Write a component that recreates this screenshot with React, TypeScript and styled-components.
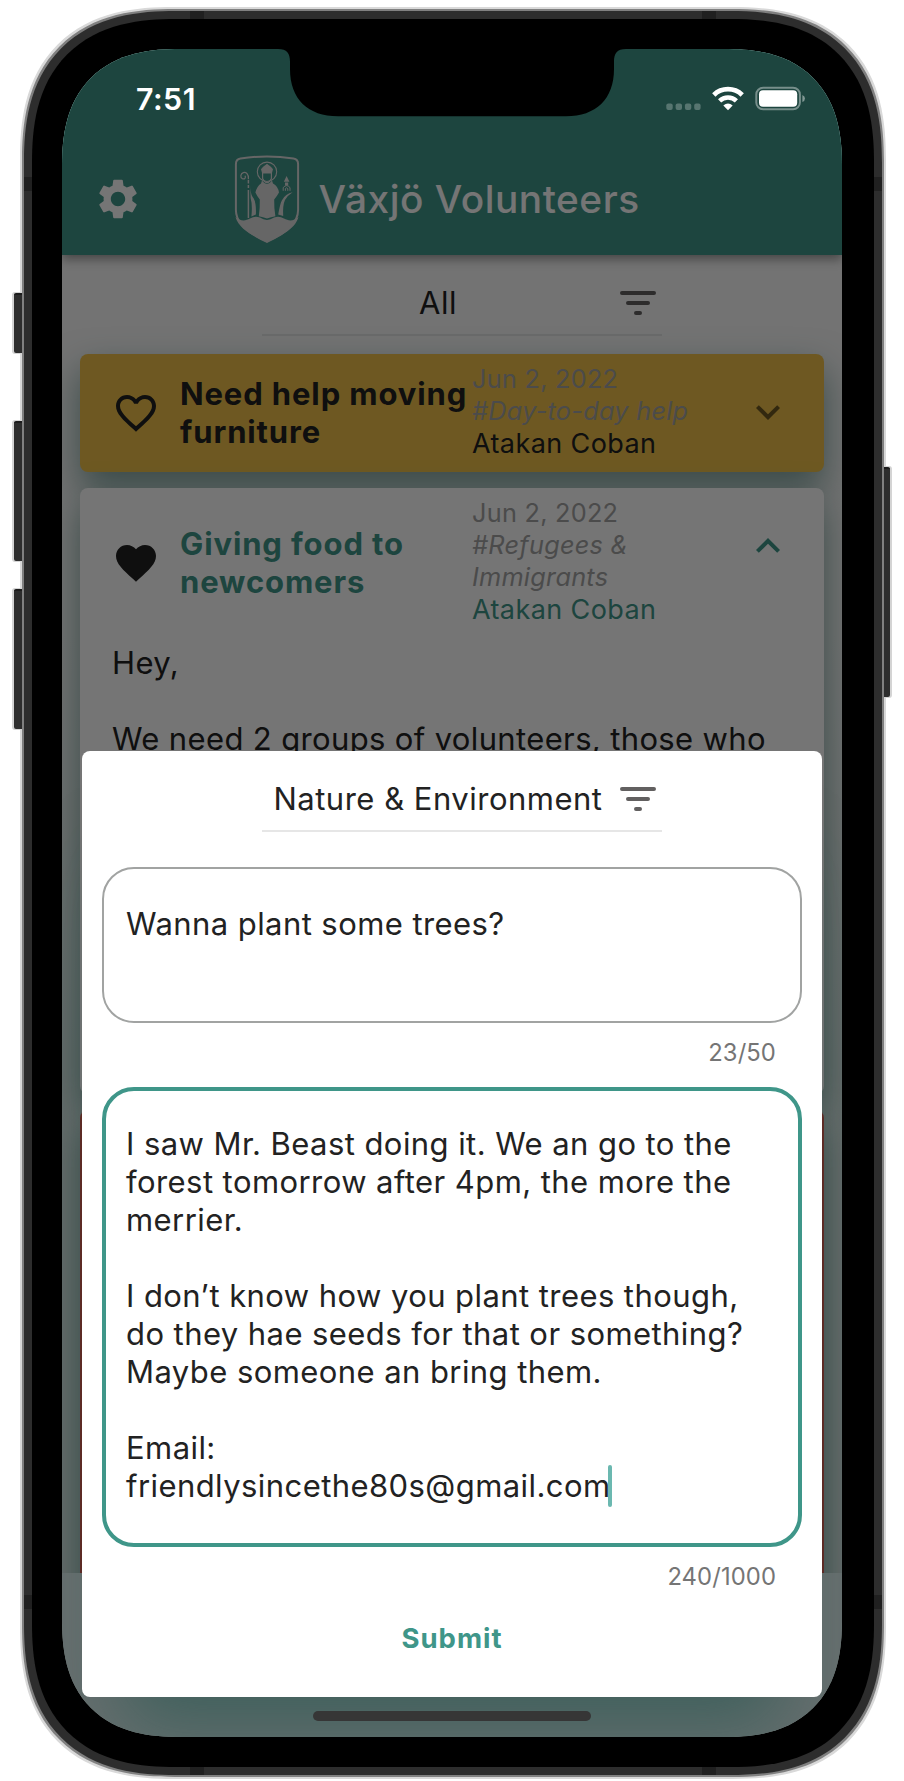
import React from "react";
import styled, { createGlobalStyle } from "styled-components";
import { MdExpandLess, MdExpandMore, MdFavorite, MdFavoriteBorder, MdSettings } from "react-icons/md";

const TEAL = "#3f9689";

const GlobalStyle = createGlobalStyle`
  * { box-sizing: border-box; }
  body {
    margin: 0;
    background: #fff;
    font-family: Inter, Roboto, "Liberation Sans", sans-serif;
    color: #222;
  }
`;

const Page = styled.main`
  display: flex;
  width: 904px;
  height: 1781px;
  padding: 11px 0 0 24px;
  overflow: hidden;
`;

/* ---------- device ---------- */

const Frame = styled.div`
  position: relative;
  width: 858px;
  height: 1764px;
  padding: 8px;
  border-radius: 126px;
  background: #2d2d2d;
  box-shadow: 0 0 0 2px #808080, 0 0 0 4px #d9d9d9;

  @supports (corner-shape: superellipse(1.3)) {
    border-radius: 152px;
    corner-shape: superellipse(1.3);
  }
`;

const Bezel = styled.div`
  height: 100%;
  padding: 30px 32px 30px 30px;
  border-radius: 118px;
  background: #000;

  @supports (corner-shape: superellipse(1.3)) {
    border-radius: 144px;
    corner-shape: superellipse(1.3);
  }
`;

const Screen = styled.div`
  position: relative;
  display: flex;
  flex-direction: column;
  height: 1688px;
  border-radius: 98px;
  overflow: hidden;
  background: #e0f2f1;

  @supports (corner-shape: superellipse(1.3)) {
    border-radius: 118px;
    corner-shape: superellipse(1.3);
  }
`;

const SideButton = styled.span<{ $side: "left" | "right"; $top: number; $height: number }>`
  position: absolute;
  ${(p) => p.$side}: ${(p) => (p.$side === "left" ? -10 : -8)}px;
  top: ${(p) => p.$top}px;
  width: ${(p) => (p.$side === "left" ? 8 : 6)}px;
  height: ${(p) => p.$height}px;
  background: #2d2d2d;
  border-top: 2px solid #1c1c1c;
  border-radius: ${(p) => (p.$side === "left" ? "2px 0 0 2px" : "0 2px 2px 0")};
  box-shadow: ${(p) => (p.$side === "left" ? "-1px" : "1px")} 0 0 1px #d4d4d4;
`;

const Antenna = styled.span<{ $x: "left" | "right"; $y: "top" | "bottom"; $vertical?: boolean }>`
  position: absolute;
  background: #202020;
  ${(p) => p.$x}: ${(p) => (p.$vertical ? 0 : 166)}px;
  ${(p) => p.$y}: ${(p) => (p.$vertical ? 166 : 0)}px;
  width: ${(p) => (p.$vertical ? 8 : 14)}px;
  height: ${(p) => (p.$vertical ? 14 : 8)}px;
`;

const Notch = styled.svg`
  position: absolute;
  top: 0;
  left: 216px;
  width: 348px;
  height: 68px;
  z-index: 4;
`;

/* ---------- app bar ---------- */

const Header = styled.header`
  position: relative;
  z-index: 1;
  flex: none;
  height: 206px;
  padding-top: 94px;
  background: ${TEAL};
  box-shadow: 0 4px 10px rgba(0, 0, 0, 0.4);
`;

const Toolbar = styled.div`
  display: flex;
  align-items: center;
  height: 112px;
  padding-left: 32px;
  color: #fff;
`;

const Crest = styled.svg`
  width: 66px;
  height: 90px;
  margin-left: 92px;
`;

const AppTitle = styled.h1`
  margin: 0 0 0 18.5px;
  font-size: 38.8px;
  font-weight: 500;
  line-height: 48px;
  letter-spacing: 0.52px;
  white-space: nowrap;
`;

const StatusBar = styled.div`
  position: absolute;
  z-index: 4;
  top: 0;
  left: 0;
  right: 0;
  display: flex;
  justify-content: space-between;
  align-items: center;
  height: 100px;
  padding: 0 37px 0 74px;
  color: #fff;
`;

const Clock = styled.time`
  font-size: 30.3px;
  font-weight: 600;
  letter-spacing: 0.5px;
`;

/* ---------- feed ---------- */

const Feed = styled.section`
  flex: none;
  height: 1318px;
  padding: 17px 18px 0;
  overflow: hidden;
  background: linear-gradient(#fafafa 380px, #e4f0ee 800px);
`;

const Select = styled.div`
  display: flex;
  align-items: center;
  width: 400px;
  height: 64px;
  border-bottom: 2px solid #e6e6e6;
`;

const FeedSelect = styled(Select)`
  margin: 0 0 18px 182px;
`;

const SelectValue = styled.span`
  flex: 1;
  text-align: center;
  font-size: 31px;
  line-height: 38px;
  letter-spacing: 0.5px;
  white-space: nowrap;
`;

const Card = styled.article<{ $color: string; $height: number }>`
  height: ${(p) => p.$height}px;
  margin-bottom: 16px;
  border-radius: 8px;
  background: ${(p) => p.$color};
  box-shadow: 0 16px 36px rgba(50, 110, 100, 0.62);
`;

const CardHead = styled.div<{ $height: number }>`
  display: flex;
  align-items: center;
  height: ${(p) => p.$height}px;
  padding: 0 32px;
`;

const CardTitle = styled.h2<{ $open?: boolean }>`
  flex: none;
  width: 292px;
  margin: 0 0 0 20px;
  font-size: 31px;
  font-weight: 700;
  line-height: 38px;
  letter-spacing: 0.88px;
  white-space: pre;
  color: ${(p) => (p.$open ? TEAL : "inherit")};
`;

const Meta = styled.div`
  flex: 1;
  align-self: flex-start;
  padding-top: 8.5px;
  font-size: 25.3px;
  line-height: 32.2px;
  letter-spacing: 0.25px;
  color: #a4a4a4;
  white-space: pre;
`;

const Author = styled.div<{ $open?: boolean }>`
  font-size: 27px;
  line-height: 34px;
  letter-spacing: 0.4px;
  color: ${(p) => (p.$open ? TEAL : "#222")};
`;

const Chevron = styled.span`
  align-self: flex-start;
  height: 48px;
  margin-top: 34px;
`;

const CardBody = styled.p`
  margin: 5.5px 32px 0;
  font-size: 31px;
  line-height: 38px;
  letter-spacing: 0.36px;
  white-space: pre;
`;

const Scrim = styled.div`
  position: absolute;
  z-index: 2;
  inset: 0;
  background: rgba(0, 0, 0, 0.54);
`;

/* ---------- dialog ---------- */

const Dialog = styled.form`
  position: absolute;
  z-index: 3;
  top: 702px;
  left: 20px;
  display: flex;
  flex-direction: column;
  width: 740px;
  height: 946px;
  padding: 17px 20px 0;
  border-radius: 8px;
  background: #fff;
  box-shadow: 0 70px 70px -40px rgba(30, 84, 76, 0.55);
`;

const DialogSelect = styled(Select)`
  margin-left: 160px;
`;

const Field = styled.div<{ $active?: boolean; $height: number }>`
  height: ${(p) => p.$height}px;
  border: ${(p) => (p.$active ? `4px solid ${TEAL}` : "2px solid #a1a3a2")};
  border-radius: 32px;
  padding: ${(p) => (p.$active ? "33.5px 20px 0" : "35.5px 22px 0")};
  font-size: 31px;
  line-height: 38px;
  letter-spacing: 0.43px;
  white-space: pre;
`;

const TitleField = styled(Field)`
  margin-top: 35px;
`;

const Line = styled.div`
  height: 38px;
`;

const Caret = styled.span`
  display: inline-block;
  width: 4px;
  height: 42px;
  margin: -2px 0 -9px -2.5px;
  vertical-align: top;
  border-radius: 2px;
  background: #6bb8b0;
`;

const Counter = styled.div`
  height: 64px;
  padding: 15px 26px 0 0;
  text-align: right;
  font-size: 23.8px;
  line-height: 30px;
  letter-spacing: 0.1px;
  color: #757575;
`;

const Submit = styled.button`
  align-self: center;
  margin: 7px 0 0;
  padding: 0;
  border: 0;
  background: none;
  font: 700 27.5px/40px Inter, sans-serif;
  letter-spacing: 1px;
  color: ${TEAL};
`;

const HomeBar = styled.div`
  position: absolute;
  z-index: 4;
  left: 251px;
  bottom: 16px;
  width: 278px;
  height: 10px;
  border-radius: 5px;
  background: #363636;
`;

/* ---------- drawings ---------- */

const FilterIcon = () => (
  <svg width="48" height="48" viewBox="0 0 48 48" stroke="#626060" strokeWidth="4" strokeLinecap="round">
    <path d="M8 14H40M14 24H34M22 34H26" />
  </svg>
);

const StatusIcons = () => (
  <svg width="141" height="28" viewBox="0 0 141 28">
    <g fill="#fff" fillOpacity="0.26">
      {[2.3, 11.6, 20.9, 30.2].map((x) => (
        <rect key={x} x={x} y="18.6" width="6.4" height="6.4" rx="2" />
      ))}
    </g>
    <g fill="none" stroke="#fff">
      <path d="M49.8 9.9A20.5 20.5 0 0 1 78.2 9.9" strokeWidth="4.8" />
      <path d="M55.6 15.9A12.2 12.2 0 0 1 72.4 15.9" strokeWidth="4.6" />
    </g>
    <path d="M64 25.3L59.3 20.5Q64 16.5 68.7 20.5Z" fill="#fff" />
    <rect x="92.3" y="2.7" width="43.6" height="21.6" rx="6.8" fill="none" stroke="#fff" strokeOpacity="0.4" strokeWidth="2" />
    <rect x="95" y="5.3" width="38.2" height="16.4" rx="4" fill="#fff" />
    <path d="M138.4 9.9Q141 11.1 141 13.5T138.4 17.1Z" fill="#fff" fillOpacity="0.45" />
  </svg>
);

const CrestArt = () => (
  <Crest viewBox="14 9 66 90" fill="#dedede">
    <path
      d="M15.9 19Q15.9 14.2 20.5 13.4Q47 9.4 73.5 13.4Q78.1 14.2 78.1 19V65C78.1 81 60 91 47 96.8C34 91 15.9 81 15.9 65Z"
      fill="none"
      stroke="#dedede"
      strokeWidth="2"
    />
    <path d="M15.5 72C20 76 25 76.4 30 73.6Q35 70.4 40 72.6Q47 77.2 54 72.6Q59 70.4 64 73.6C69 76.4 74 76 78.5 72C75 85 58 92 47 97.4C36 92 19 85 15.5 72Z" />
    <circle cx="47" cy="26.8" r="9.7" fill="none" stroke="#dedede" strokeWidth="1.1" />
    <path d="M47 18.8Q51 21.6 53 24.2L51.8 28.4H42.2L41 24.2Q43 21.6 47 18.8Z" />
    <path d="M42.6 28V33.4Q44.4 37.4 47 37.6Q49.6 37.4 51.4 33.4V28" fill="none" stroke="#dedede" strokeWidth="1.2" />
    <path d="M42 35.4Q47 42.4 52 35.4L53 38.4Q58 41 59 47.4Q57 51 54.2 54.4Q54 63 55.4 71.2Q51 71.8 47 73.6Q43 71.8 38.8 71.2Q40 63 39.8 54.4Q37 51 35.4 47.4Q37 41 41 38.4Z" />
    <path d="M30.2 38.2C30.4 46 31 50 33.6 53.2Q36.4 58 35.9 69.6L31.4 71.4Q32.6 60 30.6 53" />
    <path d="M72.6 47.2Q65.6 48.4 61.8 55.4Q60 59 58.2 69.4L63.2 71Q62.6 60 65 55Q67.4 50.4 72.6 47.2Z" />
    <path d="M28.4 45V73M28.4 35V38.4M28.4 40V43" fill="none" stroke="#dedede" strokeWidth="1.5" />
    <path d="M28.4 34.2C28.8 28.6 25.8 26.9 23.3 27.6C20.4 28.6 20 32.6 22.4 33.8C24.8 34.6 26.4 32 24.8 30.8" fill="none" stroke="#dedede" strokeWidth="1.2" />
    <path d="M66.6 31L69.4 36.8H63.8ZM65 37.6H68.2V40.4H65Z" />
    <path d="M63.2 45.8V42.6Q66.6 38.6 70 42.6V45.8M65.4 45.8V43.6Q66.6 42 67.8 43.6V45.8" fill="none" stroke="#dedede" strokeWidth="1" />
  </Crest>
);

export default function App() {
  return (
    <>
      <GlobalStyle />
      <Page>
        <Frame>
          <SideButton $side="left" $top={282} $height={60} />
          <SideButton $side="left" $top={410} $height={140} />
          <SideButton $side="left" $top={578} $height={140} />
          <SideButton $side="right" $top={456} $height={230} />
          <Antenna $x="left" $y="top" />
          <Antenna $x="right" $y="top" />
          <Antenna $x="left" $y="bottom" />
          <Antenna $x="right" $y="bottom" />
          <Antenna $x="left" $y="top" $vertical />
          <Antenna $x="right" $y="top" $vertical />
          <Antenna $x="left" $y="bottom" $vertical />
          <Antenna $x="right" $y="bottom" $vertical />
          <Bezel>
            <Screen>
              <Header>
                <Toolbar>
                  <MdSettings size={48} />
                  <CrestArt />
                  <AppTitle>Växjö Volunteers</AppTitle>
                </Toolbar>
              </Header>

              <Feed>
                <FeedSelect>
                  <SelectValue>All</SelectValue>
                  <FilterIcon />
                </FeedSelect>

                <Card $color="#efc14a" $height={118}>
                  <CardHead $height={118}>
                    <MdFavoriteBorder size={48} />
                    <CardTitle>{"Need help moving\nfurniture"}</CardTitle>
                    <Meta>
                      <div>Jun 2, 2022</div>
                      <em>#Day-to-day help</em>
                      <Author>Atakan Coban</Author>
                    </Meta>
                    <Chevron>
                      <MdExpandMore size={48} color="rgba(0,0,0,0.54)" />
                    </Chevron>
                  </CardHead>
                </Card>

                <Card $color="#fff" $height={606}>
                  <CardHead $height={150}>
                    <MdFavorite size={48} />
                    <CardTitle $open>{"Giving food to\nnewcomers"}</CardTitle>
                    <Meta>
                      <div>Jun 2, 2022</div>
                      <em>{"#Refugees &\nImmigrants"}</em>
                      <Author $open>Atakan Coban</Author>
                    </Meta>
                    <Chevron>
                      <MdExpandLess size={48} color={TEAL} />
                    </Chevron>
                  </CardHead>
                  <CardBody>{"Hey,\n\nWe need 2 groups of volunteers, those who"}</CardBody>
                </Card>

                <Card $color="#d55b4e" $height={600} />
              </Feed>

              <Scrim />

              <Dialog>
                <DialogSelect>
                  <SelectValue>Nature &amp; Environment</SelectValue>
                  <FilterIcon />
                </DialogSelect>
                <TitleField $height={156}>
                  <Line>Wanna plant some trees?</Line>
                </TitleField>
                <Counter>23/50</Counter>
                <Field $active $height={460}>
                  <Line>I saw Mr. Beast doing it. We an go to the</Line>
                  <Line>forest tomorrow after 4pm, the more the</Line>
                  <Line>merrier.</Line>
                  <Line />
                  <Line>I don’t know how you plant trees though,</Line>
                  <Line>do they hae seeds for that or something?</Line>
                  <Line>Maybe someone an bring them.</Line>
                  <Line />
                  <Line>Email:</Line>
                  <Line>
                    friendlysincethe80s@gmail.com
                    <Caret />
                  </Line>
                </Field>
                <Counter>240/1000</Counter>
                <Submit type="button">Submit</Submit>
              </Dialog>

              <StatusBar>
                <Clock>7:51</Clock>
                <StatusIcons />
              </StatusBar>
              <Notch viewBox="0 0 348 68">
                <path d="M0 0C9 0 12 4 12 13V20C12 50 30 67.3 60 67.3H288C318 67.3 336 50 336 20V13C336 4 339 0 348 0Z" />
              </Notch>
              <HomeBar />
            </Screen>
          </Bezel>
        </Frame>
      </Page>
    </>
  );
}
